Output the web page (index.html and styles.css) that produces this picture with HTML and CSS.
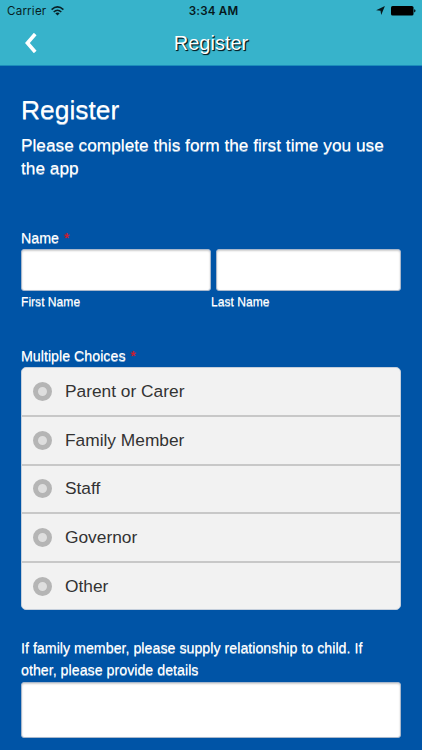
FILE: index.html
```html
<!DOCTYPE html>
<html lang="en">
<head>
<meta charset="utf-8">
<title>Register</title>
<link rel="stylesheet" href="styles.css">
</head>
<body>
<header class="top">
  <div class="status">
    <div class="carrier">Carrier
      <svg class="wifi" width="13" height="10" viewBox="0 0 13 10" fill="none" stroke="#082127" stroke-width="1.6"><path d="M.6 3.6Q6.5-1.7 12.4 3.6M2.7 6Q6.5 2.5 10.3 6"/><path d="M4.3 7.3Q6.5 5.5 8.7 7.3L6.5 9.6z" fill="#082127" stroke="none"/></svg>
    </div>
    <div class="time">3:34 AM</div>
    <div class="indicators">
      <svg width="9" height="9" viewBox="0 0 9 9"><path d="M8.9.1 5.2 8.9 4.5 4.8.1 4.2z" fill="#06191d"/></svg>
      <svg width="25" height="10" viewBox="0 0 25 10"><rect width="22.5" height="9.6" rx="1.6"/><path d="M23.2 3.2q1.3.2 1.3 1.6t-1.3 1.6z"/></svg>
    </div>
  </div>
  <nav class="bar">
    <svg class="back" width="12" height="20" viewBox="0 0 12 20" fill="none" stroke="#fff" stroke-width="3.6"><path d="M10.2 1 2.4 10l7.8 9"/></svg>
    <span class="bar-title">Register</span>
  </nav>
</header>
<main class="form">
  <h1>Register</h1>
  <p class="intro">Please complete this form the first time you use the app</p>
  <section class="name">
    <div class="label">Name <span class="required">*</span></div>
    <div class="inputs"><input aria-label="First Name"><input aria-label="Last Name"></div>
    <div class="sublabels"><span>First Name</span><span>Last Name</span></div>
  </section>
  <section class="choices">
    <div class="label">Multiple Choices <span class="required">*</span></div>
    <div class="options">
      <label class="option"><i class="radio"></i>Parent or Carer</label>
      <label class="option"><i class="radio"></i>Family Member</label>
      <label class="option"><i class="radio"></i>Staff</label>
      <label class="option"><i class="radio"></i>Governor</label>
      <label class="option"><i class="radio"></i>Other</label>
    </div>
  </section>
  <section class="details">
    <div class="label">If family member, please supply relationship to child. If other, please provide details</div>
    <textarea aria-label="Details"></textarea>
  </section>
</main>
</body>
</html>
```
FILE: styles.css
```css
* { box-sizing: border-box; }
body {
  margin: 0;
  height: 750px;
  overflow: hidden;
  background: #0054a6;
  color: #fff;
  font-family: "Liberation Sans", Arial, sans-serif;
}
.top {
  height: 66px;
  background: #37b3cb;
  border-bottom: 1px solid #1b8dbb;
}
.status {
  display: grid;
  grid-template-columns: 1fr auto 1fr;
  align-items: center;
  height: 22px;
  padding: 1px 6px 0 7px;
  color: #071e23;
  font: 11.6px/21px Inter, sans-serif;
}
.carrier { display: flex; align-items: center; gap: 5px; letter-spacing: .2px; }
.wifi { margin-bottom: 2px; }
.time { font-weight: 600; letter-spacing: .2px; padding-left: 4px; color: #06191d; }
.indicators { display: flex; justify-content: flex-end; align-items: center; gap: 6px; padding-bottom: 2px; }
.bar {
  display: grid;
  grid-template-columns: 80px 1fr 80px;
  align-items: center;
  height: 42px;
}
.back { margin-left: 25px; }
.bar-title {
  text-align: center;
  font-size: 20px;
  line-height: 22px;
  padding-bottom: 1px;
  text-shadow: 1px 1px 0 #05252d, 1px 1px 1px #000;
}
.form { padding: 27px 21px 0; text-shadow: 0 1px 0 rgba(255,255,255,.6); }
h1 { margin: 0; font-size: 26.4px; line-height: 34px; font-weight: 400; }
.intro { margin: 7px 0 0; font-size: 17.28px; line-height: 23px; }
.name { margin-top: 47px; }
.label { font-size: 14.25px; line-height: 22px; }
.required { margin-left: 1px; color: #d51a2b; text-shadow: 0 0 1px #d51a2b; }
.inputs { display: grid; grid-template-columns: 190px 185px; gap: 5px; }
input, textarea {
  display: block;
  width: 100%;
  margin: 0;
  border: 1px solid #a9b8cc;
  border-radius: 3px;
  background: #fff;
  box-shadow: inset 0 1px 2px rgba(0,0,0,.2);
  resize: none;
}
input { height: 42px; }
.sublabels {
  display: grid;
  grid-template-columns: 1fr 1fr;
  font-size: 12.1px;
  line-height: 22px;
}
.choices { margin-top: 32px; }
.options {
  overflow: hidden;
  height: 243px;
  border: 1px solid #c5cfdc;
  border-radius: 5px;
  background: #f2f2f2;
}
.option {
  display: flex;
  align-items: center;
  gap: 13px;
  height: 48.75px;
  padding-left: 11px;
  border-bottom: 2px solid #c8c8c8;
  color: #333;
  font-size: 17.33px;
  text-shadow: none;
}
.option:last-child { border-bottom: 0; height: 46px; }
.radio {
  width: 19px;
  height: 19px;
  border: 5.5px solid #b5b5b5;
  border-radius: 50%;
  background: #dedede;
}
.details { margin-top: 28px; }
.details .label { margin-bottom: 1px; margin-top: -1px; }
textarea { height: 56px; }
```
